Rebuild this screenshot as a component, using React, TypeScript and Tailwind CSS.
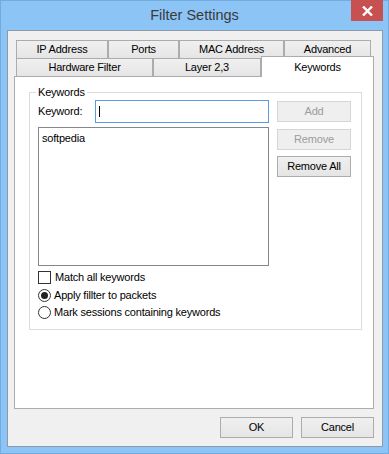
const FONT = { fontFamily: '"Liberation Sans", Arial, sans-serif' };

function Tab({ label, w }: { label: string; w: string }) {
  return (
    <div
      className={`${w} h-[18px] flex items-center justify-center border border-b-0 border-[#acacac] bg-linear-to-b from-[#f0f0f0] to-[#e5e5e5] text-[11px] tracking-[-0.2px] text-black`}
    >
      {label}
    </div>
  );
}

function Button({
  label,
  w,
  disabled,
}: {
  label: string;
  w: string;
  disabled?: boolean;
}) {
  return (
    <div
      className={
        disabled
          ? `${w} h-[21px] flex items-center justify-center border border-[#d5d5d5] bg-[#efefef] text-[11px] tracking-[-0.2px] text-[#9c9c9c]`
          : `${w} h-[21px] flex items-center justify-center border border-[#acacac] bg-linear-to-b from-[#f0f0f0] to-[#e5e5e5] text-[11px] tracking-[-0.2px] text-black`
      }
    >
      {label}
    </div>
  );
}

function Radio({ checked }: { checked?: boolean }) {
  return (
    <div className="w-[13px] h-[13px] rounded-full border border-[#333333] bg-white flex items-center justify-center">
      {checked && <div className="w-[7px] h-[7px] rounded-full bg-[#222222]" />}
    </div>
  );
}

export default function App() {
  return (
    <div
      className="relative w-[389px] h-[454px] bg-[#8cc4f6] border border-[#72abe0] flex flex-col"
      style={FONT}
    >
      {/* Title bar */}
      <div className="h-[29px] flex items-center justify-center">
        <span className="text-[14.5px] text-[#3a3a3a] mt-[1px]">Filter Settings</span>
      </div>
      <div className="absolute top-[-1px] right-[5px] w-[32px] h-[21px] bg-[#c75050] flex items-center justify-center">
        <svg width="11" height="10" viewBox="0 0 11 10">
          <path d="M1 0.5 L10 9.5 M10 0.5 L1 9.5" stroke="white" strokeWidth="2.4" />
        </svg>
      </div>

      {/* Client area */}
      <div className="ml-[6px] w-[376px] h-[417px] border border-[#8d9aa8] bg-[#f0f0f0] flex flex-col">
        {/* Tabs */}
        <div className="ml-[8px] mt-[9px] flex flex-col">
          <div className="flex">
            <Tab label="IP Address" w="w-[92px]" />
            <Tab label="Ports" w="w-[71px]" />
            <Tab label="MAC Address" w="w-[105px]" />
            <Tab label="Advanced" w="w-[87px]" />
          </div>
          <div className="flex items-end h-[18px]">
            <Tab label="Hardware Filter" w="w-[137px]" />
            <Tab label="Layer 2,3" w="w-[108px]" />
            <div className="relative z-10 w-[113px] h-[21px] mb-[-1px] border border-b-0 border-[#acacac] bg-white flex justify-center pt-[2px] text-[11px] tracking-[-0.2px] text-black">
              Keywords
            </div>
          </div>
        </div>

        {/* Tab panel */}
        <div className="ml-[6px] w-[360px] h-[333px] border border-[#acacac] bg-white flex flex-col">
          <div className="relative ml-[14px] mt-[15px] w-[333px] h-[238px] border border-[#dcdcdc] flex gap-[8px] pl-[8px]">
            <span className="absolute top-[-8px] left-[6px] bg-white px-[2px] text-[11px] tracking-[-0.2px] leading-[14px] text-black">
              Keywords
            </span>

            {/* Left column */}
            <div className="w-[231px] flex flex-col pt-[7px]">
              <div className="flex items-center h-[23px]">
                <span className="w-[57px] text-[11px] tracking-[-0.2px] text-black">Keyword:</span>
                <div className="w-[174px] h-[23px] border border-[#569de5] bg-white flex items-center">
                  <div className="ml-[3px] w-px h-[11px] bg-black" />
                </div>
              </div>
              <div className="mt-[4px] w-[231px] h-[139px] border border-[#828790] bg-white px-[3px] pt-[2px] text-[11px] tracking-[-0.2px] text-black">
                softpedia
              </div>
              <div className="mt-[3px] h-[17px] flex items-center gap-[4px]">
                <div className="w-[13px] h-[13px] border border-[#333333] bg-white" />
                <span className="text-[11px] tracking-[-0.2px] text-black">Match all keywords</span>
              </div>
              <div className="mt-[1px] h-[17px] flex items-center gap-[3px]">
                <Radio checked />
                <span className="text-[11px] tracking-[-0.2px] text-black">Apply fillter to packets</span>
              </div>
              <div className="h-[17px] flex items-center gap-[3px]">
                <Radio />
                <span className="text-[11px] tracking-[-0.2px] text-black">Mark sessions containing keywords</span>
              </div>
            </div>

            {/* Right column */}
            <div className="flex flex-col pt-[8px]">
              <Button label="Add" w="w-[74px]" disabled />
              <div className="mt-[7px]">
                <Button label="Remove" w="w-[74px]" disabled />
              </div>
              <div className="mt-[6px]">
                <Button label="Remove All" w="w-[74px]" />
              </div>
            </div>
          </div>
        </div>

        {/* Dialog buttons */}
        <div className="mt-[8px] flex justify-end gap-[8px] pr-[8px]">
          <Button label="OK" w="w-[73px]" />
          <Button label="Cancel" w="w-[73px]" />
        </div>
      </div>
    </div>
  );
}
